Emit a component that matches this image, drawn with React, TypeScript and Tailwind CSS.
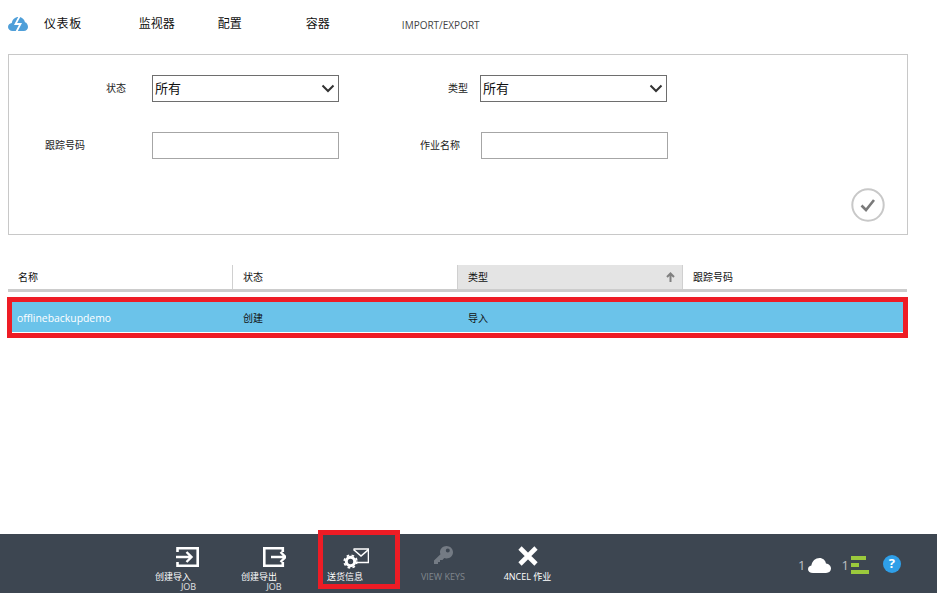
const FONT = "font-['Open_Sans','Noto_Sans_CJK_SC',sans-serif]";

function Select({ className }: { className: string }) {
  return (
    <div className={`flex h-[27px] w-[187px] items-center justify-between border border-[#6e6e6e] bg-white pl-[2px] pr-[3px] text-[13px] leading-none text-[#111] ${className}`}>
      <span>所有</span>
      <svg width="14" height="9" viewBox="0 0 14 9" fill="none">
        <path d="M1.5 1.5 7 7l5.5-5.5" stroke="#333" strokeWidth="2" />
      </svg>
    </div>
  );
}

function Field({ className }: { className: string }) {
  return <div className={`h-[27px] w-[187px] border border-[#a6a6a6] bg-white ${className}`} />;
}

function Label({ text, width }: { text: string; width: string }) {
  return <div className={`text-right text-[10px] leading-[27px] text-[#222] ${width}`}>{text}</div>;
}

function HeaderCell({ text, sorted, last }: { text: string; sorted?: boolean; last?: boolean }) {
  return (
    <div className={`flex h-[24px] items-center justify-between pl-[10px] pr-[7px] text-[10px] text-[#111] ${last ? "" : "border-r border-[#d0d0d0]"} ${sorted ? "bg-[#e4e4e4]" : ""}`}>
      <span>{text}</span>
      {sorted && (
        <svg width="9" height="10" viewBox="0 0 9 10" fill="none">
          <path d="M4.500 10V2M1 5l3.500-3.500L8 5" stroke="#808080" strokeWidth="2" />
        </svg>
      )}
    </div>
  );
}

function Action({ icon, label, job, dim, width, iconClass, labelClass }: { icon: React.ReactNode; label: string; job?: boolean; dim?: boolean; width: string; iconClass: string; labelClass?: string }) {
  return (
    <div className={`flex shrink-0 flex-col items-center ${width}`}>
      <div className={`flex h-[38px] w-full items-end justify-center ${iconClass}`}>{icon}</div>
      <div className={`whitespace-nowrap text-[9px] leading-[10px] ${dim ? "text-[#80868d]" : "text-white"} ${labelClass ?? ""}`}>{label}</div>
      {job && <div className="whitespace-nowrap text-[9px] leading-[10px] text-[#e0e2e4]">JOB</div>}
    </div>
  );
}

export default function App() {
  return (
    <div className={`relative flex h-[593px] w-[940px] flex-col overflow-hidden bg-white ${FONT}`}>
      <nav className="flex h-[54px] shrink-0 items-center pb-[7px] text-[12px] text-[#111]">
        <svg className="ml-[8px]" width="20" height="14" viewBox="0 0 20 14">
          <path fill="#4f9fd9" d="M4.500 14C2 14 0 12.300 0 10c0-2.200 1.700-3.800 3.800-4C4.300 2.500 7 0 10.500 0c3.300 0 5.800 2 6.500 5.200 1.800.4 3 2.500 3 4.800 0 2.300-1.700 4-4.200 4Z" />
          <path fill="none" stroke="#fff" strokeWidth="1.800" d="M11.500-.5 7.500 7h5L8.500 14.500" />
        </svg>
        <span className="ml-[16px] tracking-[0.6px]">仪表板</span>
        <span className="ml-[57px]">监视器</span>
        <span className="ml-[43px]">配置</span>
        <span className="ml-[64px]">容器</span>
        <span className="ml-[72px] mt-[3px] text-[10px] text-[#444]">IMPORT/EXPORT</span>
      </nav>

      <section className="mx-[8px] flex h-[181px] w-[900px] shrink-0 flex-col border border-[#c8c8c8] pt-[20px]">
        <div className="flex">
          <Label text="状态" width="w-[117px]" />
          <Select className="ml-[26px]" />
          <Label text="类型" width="w-[129px]" />
          <Select className="ml-[12px]" />
        </div>
        <div className="mt-[30px] flex">
          <Label text="跟踪号码" width="w-[76px]" />
          <Field className="ml-[67px]" />
          <Label text="作业名称" width="w-[121px]" />
          <Field className="ml-[21px]" />
        </div>
        <div className="mr-[22px] mt-[29px] flex justify-end">
          <svg width="34" height="34" viewBox="0 0 34 34" fill="none">
            <circle cx="17" cy="17" r="15.700" stroke="#c8c8c8" strokeWidth="2" />
            <path d="M10.500 17.500 15 22l8-10" stroke="#7a7a7a" strokeWidth="2.600" />
          </svg>
        </div>
      </section>

      <div className="ml-[8px] mt-[30px] grid w-[899px] shrink-0 grid-cols-[225px_225px_225px_224px] border-b-[3px] border-[#cccccc]">
        <HeaderCell text="名称" />
        <HeaderCell text="状态" />
        <HeaderCell text="类型" sorted />
        <HeaderCell text="跟踪号码" last />
      </div>

      <div className="ml-[12px] mt-[10px] grid h-[30px] w-[892px] shrink-0 grid-cols-[226px_225px_1fr] items-center bg-[#6bc3ea] pl-[5px] pt-[3px] text-[10px] text-[#111]">
        <span className="text-[10.400px] text-white">offlinebackupdemo</span>
        <span>创建</span>
        <span>导入</span>
      </div>
      <div className="ml-[12px] h-px w-[892px] shrink-0 bg-white" />

      <div className="flex-1" />

      <footer className="flex h-[59px] w-[937px] shrink-0 items-start bg-[#3d4651]">
        <div className="ml-[146px] flex">
          <Action
            width="w-[85px]"
            iconClass="pb-[5px] pr-[2px]"
            labelClass="mr-[31px]"
            label="创建导入"
            job
            icon={
              <svg width="23" height="20" viewBox="0 0 23 20" fill="none" stroke="#fff">
                <path d="M1.500 5V1.300h20.200v17.400H1.500V15" strokeWidth="2.600" />
                <path d="M0 10h15M10.500 5l5 5-5 5" strokeWidth="2.400" />
              </svg>
            }
          />
          <Action
            width="w-[86px]"
            iconClass="pb-[5px]"
            labelClass="mr-[30px]"
            label="创建导出"
            job
            icon={
              <svg width="23" height="20" viewBox="0 0 23 20" fill="none" stroke="#fff">
                <path d="M19.800 5V1.300H1.300v17.400h18.500V15" strokeWidth="2.600" />
                <path d="M8 10h14M17.500 5l5 5-5 5" strokeWidth="2.400" />
              </svg>
            }
          />
          <Action
            width="w-[86px]"
            iconClass="pb-[3px] pr-[8px]"
            labelClass="mr-[30px]"
            label="送货信息"
            icon={
              <svg width="26" height="21" viewBox="0 0 26 21" fill="none">
                <path d="M10.500 1h15v13.500H13" stroke="#fff" strokeWidth="1.600" />
                <path d="M10.500 1.500 18 8l7.500-6.500" stroke="#fff" strokeWidth="1.600" />
                <circle cx="7.500" cy="13.500" r="4.200" stroke="#fff" strokeWidth="3" />
                <circle cx="7.500" cy="13.500" r="6.300" stroke="#fff" strokeWidth="1.800" strokeDasharray="2.600 2.400" />
              </svg>
            }
          />
          <Action
            width="w-[84px]"
            iconClass="pb-[8px] pr-[4px]"
            labelClass="mr-[4px]"
            dim
            label="VIEW KEYS"
            icon={
              <svg width="19" height="18" viewBox="0 0 19 18">
                <path fill="#747b84" fillRule="evenodd" d="M12.500 0C16 0 19 2.800 19 6.300c0 3.400-2.900 6.200-6.500 6.200-.9 0-1.600-.1-2.300-.4L8.500 14H6v2H4v2H0v-3.500l6.500-6.300C6.200 7.500 6 7 6 6.300 6 2.800 9 0 12.500 0Zm1.300 2.600a2 2 0 1 0 0 4 2 2 0 0 0 0-4Z" />
              </svg>
            }
          />
          <Action
            width="w-[88px]"
            iconClass="pb-[6px] pr-[6px]"
            labelClass="mr-[7px]"
            label="4NCEL 作业"
            icon={
              <svg width="20" height="20" viewBox="0 0 20 20" fill="none">
                <path d="M2 2l16 16M18 2 2 18" stroke="#fff" strokeWidth="4.600" />
              </svg>
            }
          />
        </div>
        <div className="ml-[223px] mt-[22px] flex items-center text-[13px] leading-none text-[#bdc0c4]">
          <span>1</span>
          <svg className="ml-[3px]" width="23" height="15" viewBox="0 0 23 15">
            <path fill="#fff" d="M5 15c-3 0-5-1.500-5-3.800 0-2 1.400-3.400 3.400-3.700C4 3 7.500 0 11.500 0c3.400 0 6 2.300 6.500 5.600 2.800.3 5 2.400 5 5 0 2.600-2 4.400-5 4.400H5Z" />
          </svg>
          <span className="ml-[10px]">1</span>
          <div className="ml-[2px] flex w-[18px] flex-col gap-[3px]">
            <div className="h-[4px] w-[15px] bg-[#9bc93c]" />
            <div className="h-[4px] w-[8px] bg-[#9bc93c]" />
            <div className="h-[4px] w-[18px] bg-[#9bc93c]" />
          </div>
          <div className="ml-[14px] mt-[-3px] flex h-[18px] w-[18px] items-center justify-center rounded-full bg-[#2f9fe8] text-[13px] font-bold text-white">?</div>
        </div>
      </footer>

      <div className="absolute left-[7px] top-[297px] h-[41px] w-[901px] border-[5px] border-[#ee1c25]" />
      <div className="absolute left-[318px] top-[530px] h-[59px] w-[82px] border-[5px] border-[#ee1c25]" />
    </div>
  );
}
